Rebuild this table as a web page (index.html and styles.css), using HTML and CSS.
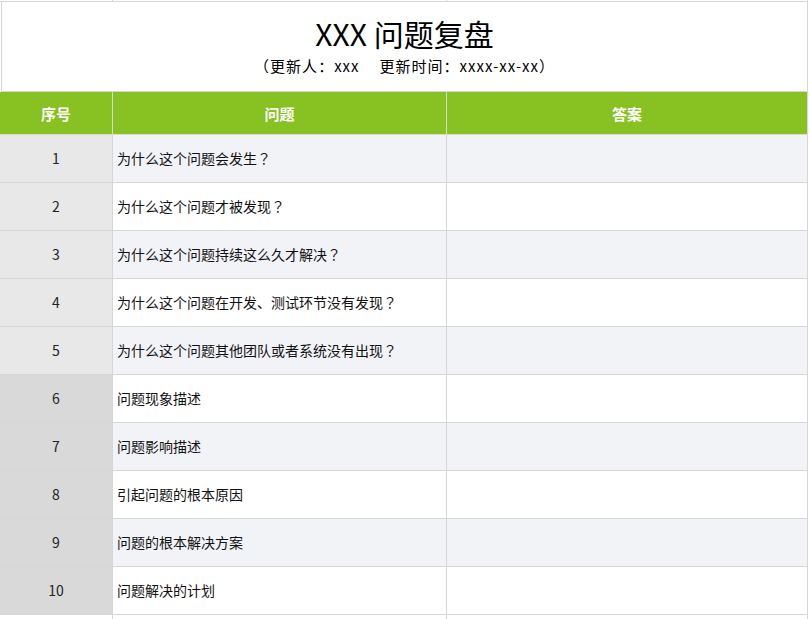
FILE: index.html
```html
<!DOCTYPE html>
<html lang="zh-CN">
<head>
<meta charset="utf-8">
<title>XXX 问题复盘</title>
<link rel="stylesheet" href="styles.css">
</head>
<body>
<div class="sheet">
  <div class="row strip">
    <div class="cell"></div><div class="cell"></div><div class="cell"></div>
  </div>
  <div class="title-block">
    <h1 class="title">XXX 问题复盘</h1>
    <p class="subtitle"><span class="p">（</span>更新人<span class="p">：</span>xxx<span class="gap"></span>更新时间<span class="p">：</span>xxxx-xx-xx<span class="p">）</span></p>
  </div>
  <div class="row head">
    <div class="cell">序号</div><div class="cell">问题</div><div class="cell">答案</div>
  </div>
  <div class="row body stripe"><div class="cell num light">1</div><div class="cell q">为什么这个问题会发生<span class="p">？</span></div><div class="cell"></div></div>
  <div class="row body"><div class="cell num light">2</div><div class="cell q">为什么这个问题才被发现<span class="p">？</span></div><div class="cell"></div></div>
  <div class="row body stripe"><div class="cell num light">3</div><div class="cell q">为什么这个问题持续这么久才解决<span class="p">？</span></div><div class="cell"></div></div>
  <div class="row body"><div class="cell num light">4</div><div class="cell q">为什么这个问题在开发、测试环节没有发现<span class="p">？</span></div><div class="cell"></div></div>
  <div class="row body stripe"><div class="cell num light">5</div><div class="cell q">为什么这个问题其他团队或者系统没有出现<span class="p">？</span></div><div class="cell"></div></div>
  <div class="row body"><div class="cell num dark">6</div><div class="cell q">问题现象描述</div><div class="cell"></div></div>
  <div class="row body stripe"><div class="cell num dark">7</div><div class="cell q">问题影响描述</div><div class="cell"></div></div>
  <div class="row body"><div class="cell num dark">8</div><div class="cell q">引起问题的根本原因</div><div class="cell"></div></div>
  <div class="row body stripe"><div class="cell num dark">9</div><div class="cell q">问题的根本解决方案</div><div class="cell"></div></div>
  <div class="row body"><div class="cell num dark">10</div><div class="cell q">问题解决的计划</div><div class="cell"></div></div>
  <div class="row tail"><div class="cell"></div><div class="cell"></div><div class="cell"></div></div>
</div>
</body>
</html>
```

FILE: styles.css
```css
html, body {
  margin: 0;
  padding: 0;
  background: #ffffff;
}
body {
  font-family: "Noto Sans CJK SC", "Noto Sans", sans-serif;
  color: #1a1a1a;
  width: 809px;
  height: 619px;
  overflow: hidden;
}
.sheet {
  width: 808px;
}
.row {
  display: grid;
  grid-template-columns: 113px 334px 361px;
}
.cell {
  box-sizing: border-box;
  border-right: 1px solid #d6d6d6;
  border-bottom: 1px solid #d6d6d6;
}
.strip {
  height: 2px;
}
.tail .cell {
  height: 4px;
  border-bottom: 0;
}
.p {
  font-family: "Noto Sans CJK TC", "Noto Sans CJK SC", sans-serif;
}
.title-block {
  box-sizing: border-box;
  height: 90px;
  margin-left: 1px;
  border-left: 1px solid #d6d6d6;
  border-right: 1px solid #d6d6d6;
  border-bottom: 1px solid #d6d6d6;
  text-align: center;
  padding-top: 9px;
}
.title {
  margin: 0;
  font-size: 30px;
  font-weight: 400;
  line-height: 44px;
  color: #000;
}
.subtitle {
  margin: 0;
  font-size: 15px;
  line-height: 22px;
  letter-spacing: 1px;
  color: #000;
}
.gap {
  display: inline-block;
  width: 20px;
}
.head .cell {
  height: 43px;
  background: #87c122;
  color: #ffffff;
  font-size: 15px;
  font-weight: 700;
  display: flex;
  align-items: center;
  justify-content: center;
  border-right-color: #d9d9d9;
  border-bottom-color: #d9d9d9;
}
.body .cell {
  height: 48px;
  font-size: 14px;
  display: flex;
  align-items: center;
  padding-bottom: 2px;
}
.body.stripe .cell {
  background: #f2f3f7;
}
.body .num {
  justify-content: center;
  color: #222;
}
.body.stripe .num.light,
.body .num.light {
  background: #e8e8e8;
}
.body.stripe .num.dark,
.body .num.dark {
  background: #d9d9d9;
}
.body .q {
  padding-left: 4px;
  color: #111;
}
```
